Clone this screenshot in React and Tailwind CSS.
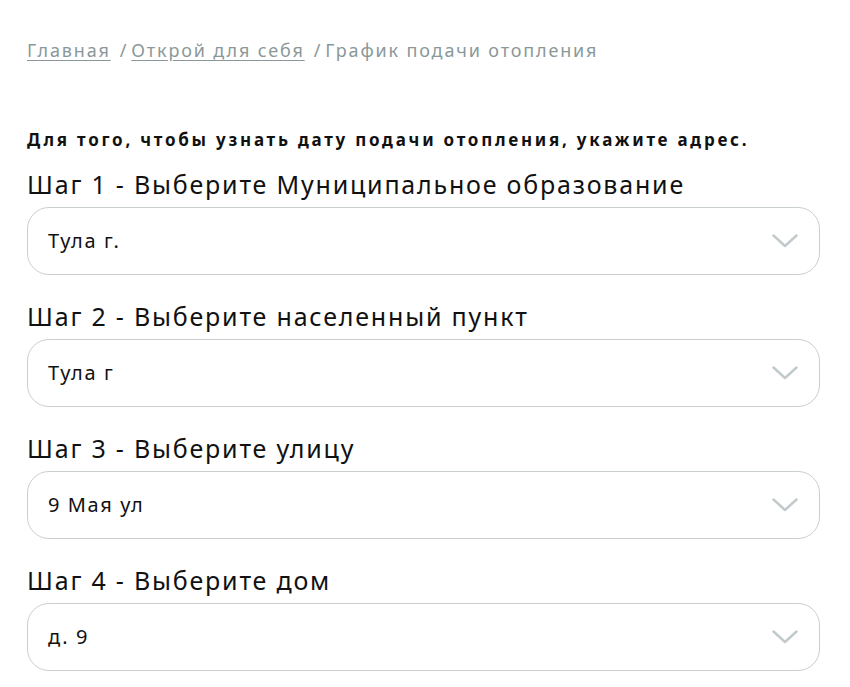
import React from "react";

const steps = [
    { label: "Шаг 1 - Выберите Муниципальное образование", value: "Тула г." },
    { label: "Шаг 2 - Выберите населенный пункт", value: "Тула г" },
    { label: "Шаг 3 - Выберите улицу", value: "9 Мая ул" },
    { label: "Шаг 4 - Выберите дом", value: "д. 9" },
];

const Chevron = () => (
    <svg width="26" height="14" viewBox="0 0 26 14" fill="none">
        <path d="M1.5 1.5 L13 12 L24.5 1.5" stroke="#c3cacd" strokeWidth="2.5" strokeLinecap="round" strokeLinejoin="round" />
    </svg>
);

const App = () => {
    return (
        <div className="min-h-screen bg-white px-[27px] pt-[36px] text-[#111]" style={{ fontFamily: '"Noto Sans", "Open Sans", sans-serif' }}>
            <nav className="flex items-center text-[18px] leading-[28px] tracking-[1.85px] text-[#8a9899]">
                <a href="#" className="underline underline-offset-[3px]">Главная</a>
                <span className="ml-[9px] mr-[3px]">/</span>
                <a href="#" className="underline underline-offset-[3px]">Открой для себя</a>
                <span className="ml-[9px] mr-[3px]">/</span>
                <span>График подачи отопления</span>
            </nav>

            <p className="mt-[64px] text-[17px] font-bold leading-[24px] tracking-[2.75px]">
                Для того, чтобы узнать дату подачи отопления, укажите адрес.
            </p>

            <div className="mt-[15px] flex flex-col gap-[24px]">
                {steps.map((s) => (
                    <div key={s.label}>
                        <div className="text-[25px] leading-[34px] tracking-[1.8px]">{s.label}</div>
                        <button className="mt-[6px] flex h-[68px] w-[793px] items-center justify-between rounded-[22px] border border-[#c9cfd1] pl-[20px] pr-[21px] text-left text-[20px] tracking-[1.6px]">
                            <span>{s.value}</span>
                            <Chevron />
                        </button>
                    </div>
                ))}
            </div>
        </div>
    );
};

export default App;
